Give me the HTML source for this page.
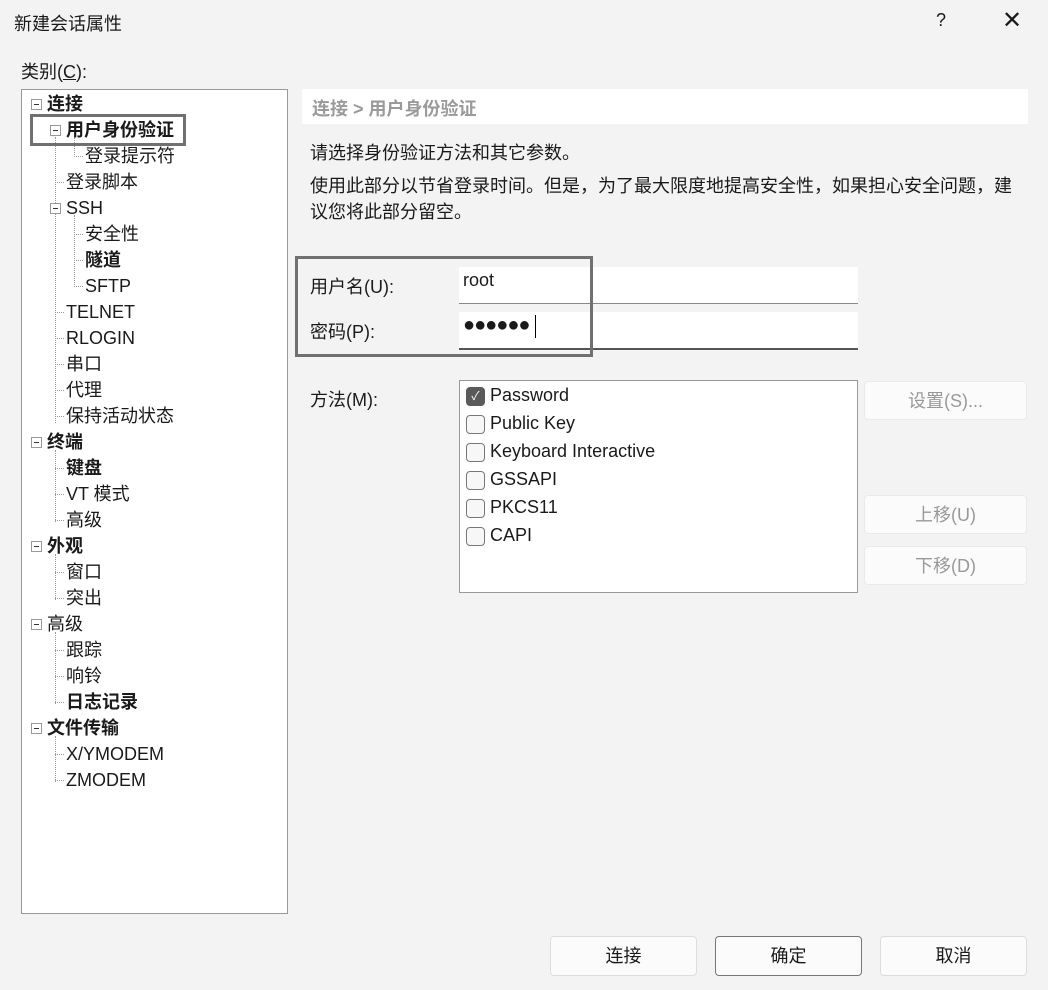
<!DOCTYPE html>
<html><head><meta charset="utf-8"><style>
*{box-sizing:border-box;margin:0;padding:0}
body{width:1048px;height:990px;background:#f3f3f3;font-family:"Liberation Sans","Noto Sans CJK SC",sans-serif;color:#1a1a1a;position:relative;overflow:hidden;font-size:18px}
.a{position:absolute;white-space:nowrap}
.t{position:absolute;white-space:nowrap;line-height:26px;height:26px}
.b{font-weight:bold}
.bx{position:absolute;width:11px;height:11px;border:1px solid #999;background:#fff}
.bx:after{content:"";position:absolute;left:2px;top:4px;width:5px;height:1px;background:#333}
.vl{position:absolute;border-left:1px dotted #999;width:0}
.hl{position:absolute;border-top:1px dotted #999;height:0}
.btn{position:absolute;border:1px solid #ddd;border-radius:4px;background:#fbfbfb;text-align:center;font-size:18px}
.cb{position:absolute;left:466px;width:19px;height:19px;border:1px solid #777;border-radius:4px;background:#f7f7f7}
</style></head><body>
<div class="a" style="left:14px;top:10px;font-size:18px">新建会话属性</div>
<div class="a" style="left:936px;top:10px;font-size:18px">?</div>
<div class="a" style="left:1002px;top:6px;font-size:24px;font-weight:300">✕</div>
<div class="a" style="left:21px;top:58px">类别(<u>C</u>):</div>

<div class="a" style="left:21px;top:89px;width:267px;height:825px;background:#fff;border:1px solid #999"></div>
<!-- tree lines -->
<div class="vl" style="left:55px;top:137px;height:286px"></div>
<div class="vl" style="left:74px;top:137px;height:20px"></div>
<div class="vl" style="left:74px;top:215px;height:72px"></div>
<div class="vl" style="left:55px;top:450px;height:72px"></div>
<div class="vl" style="left:55px;top:554px;height:46px"></div>
<div class="vl" style="left:55px;top:632px;height:72px"></div>
<div class="vl" style="left:55px;top:736px;height:46px"></div>
<div id="tree"></div>
<div class="a" style="left:30px;top:114px;width:156px;height:32px;border:3px solid #707070"></div>

<div class="a" style="left:302px;top:89px;width:726px;height:35px;background:#fff"></div>
<div class="a b" style="left:312px;top:95px;color:#9a9a9a;font-size:18px">连接 &gt; 用户身份验证</div>
<div class="a" style="left:310px;top:139px">请选择身份验证方法和其它参数。</div>
<div class="a" style="left:310px;top:172px">使用此部分以节省登录时间。但是，为了最大限度地提高安全性，如果担心安全问题，建</div>
<div class="a" style="left:310px;top:198px">议您将此部分留空。</div>

<div class="a" style="left:459px;top:267px;width:399px;height:37px;background:#fff;border-bottom:1px solid #888"></div>
<div class="a" style="left:459px;top:312px;width:399px;height:38px;background:#fff;border-bottom:2px solid #555"></div>
<div class="a" style="left:310px;top:273px">用户名(U):</div>
<div class="a" style="left:310px;top:318px">密码(P):</div>
<div class="a" style="left:463px;top:270px">root</div>
<div class="a" style="left:463px;top:314px;font-size:20px;letter-spacing:-1px">●●●●●●</div>
<div class="a" style="left:535px;top:315px;width:1px;height:23px;background:#000"></div>
<div class="a" style="left:295px;top:256px;width:298px;height:101px;border:3px solid #707070"></div>

<div class="a" style="left:310px;top:386px">方法(M):</div>
<div class="a" style="left:459px;top:380px;width:399px;height:213px;background:#fff;border:1px solid #999"></div>
<div class="cb" style="top:387px;background:#5a5a5a;border-color:#5a5a5a;color:#fff;font-size:12px;text-align:center;line-height:17px">✓</div>
<div class="cb" style="top:415px"></div><div class="cb" style="top:443px"></div><div class="cb" style="top:471px"></div><div class="cb" style="top:499px"></div><div class="cb" style="top:527px"></div>
<div class="a" style="left:490px;top:385px">Password</div>
<div class="a" style="left:490px;top:413px">Public Key</div>
<div class="a" style="left:490px;top:441px">Keyboard Interactive</div>
<div class="a" style="left:490px;top:469px">GSSAPI</div>
<div class="a" style="left:490px;top:497px">PKCS11</div>
<div class="a" style="left:490px;top:525px">CAPI</div>

<div class="btn" style="left:864px;top:381px;width:163px;height:39px;line-height:38px;color:#999;border-color:#eaeaea">设置(S)...</div>
<div class="btn" style="left:864px;top:495px;width:163px;height:39px;line-height:38px;color:#999;border-color:#eaeaea">上移(U)</div>
<div class="btn" style="left:864px;top:546px;width:163px;height:39px;line-height:38px;color:#999;border-color:#eaeaea">下移(D)</div>

<div class="btn" style="left:550px;top:936px;width:147px;height:40px;line-height:39px">连接</div>
<div class="btn" style="left:715px;top:936px;width:147px;height:40px;line-height:39px;border-color:#777">确定</div>
<div class="btn" style="left:880px;top:936px;width:147px;height:40px;line-height:39px">取消</div>

<script>
var items=[[0,"连接",1,1],[1,"用户身份验证",1,1],[2,"登录提示符"],[1,"登录脚本"],[1,"SSH",0,1],[2,"安全性"],[2,"隧道",1],[2,"SFTP"],[1,"TELNET"],[1,"RLOGIN"],[1,"串口"],[1,"代理"],[1,"保持活动状态"],[0,"终端",1,1],[1,"键盘",1],[1,"VT 模式"],[1,"高级"],[0,"外观",1,1],[1,"窗口"],[1,"突出"],[0,"高级",0,1],[1,"跟踪"],[1,"响铃"],[1,"日志记录",1],[0,"文件传输",1,1],[1,"X/YMODEM"],[1,"ZMODEM"]];
var h="";
items.forEach(function(it,i){var y=91+i*26,l=it[0];var tx=[47,66,85][l];
h+='<div class="t'+(it[2]?' b':'')+'" style="left:'+tx+'px;top:'+y+'px">'+it[1]+'</div>';
var cx=[36,55,74][l];
if(it[3]){h+='<div class="bx" style="left:'+(cx-5)+'px;top:'+(y+8)+'px"></div>';}
else{h+='<div class="hl" style="left:'+cx+'px;top:'+(y+13)+'px;width:'+(tx-cx-2)+'px"></div>';}
});
document.getElementById("tree").innerHTML=h;
</script>
</body></html>
